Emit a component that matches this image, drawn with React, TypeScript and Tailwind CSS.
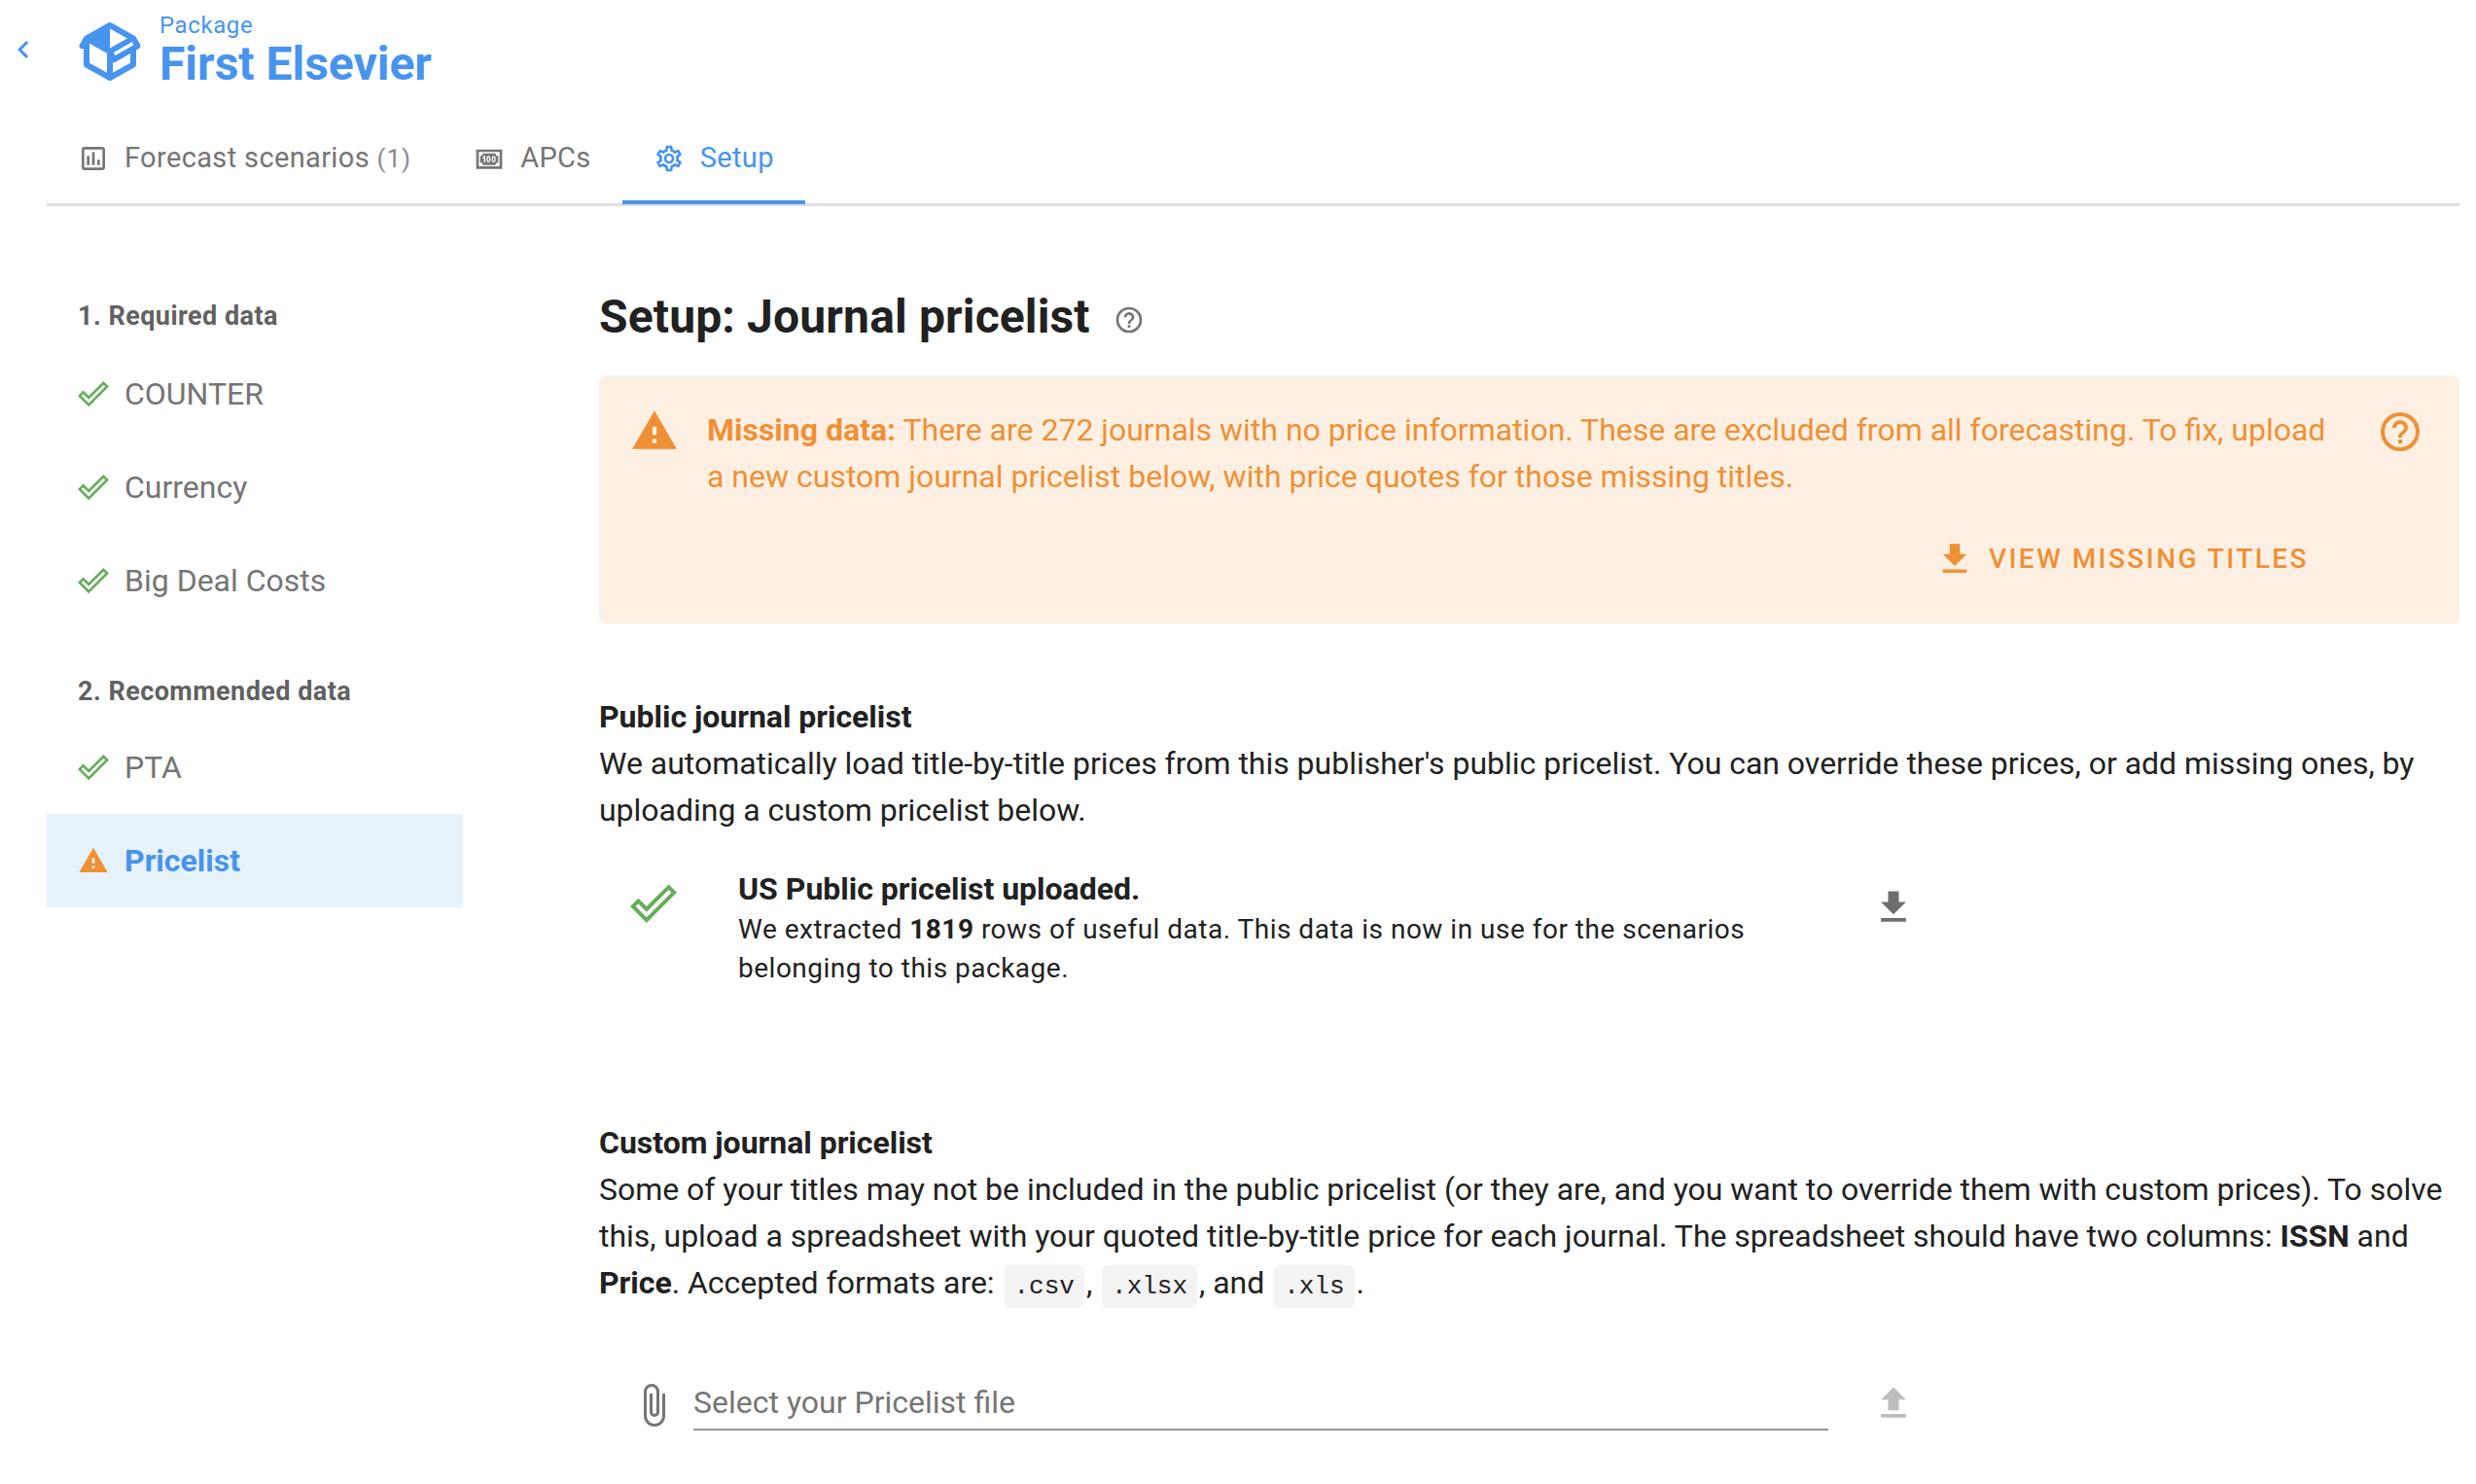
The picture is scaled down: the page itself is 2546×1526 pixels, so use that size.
import React from "react";

const P = {
  check: "M19.78,2.2L24,6.42L8.44,22L0,13.55L4.22,9.33L8.44,13.55L19.78,2.2M19.78,5L8.44,16.36L4.22,12.19L2.81,13.55L8.44,19.17L21.19,6.42L19.78,5Z",
  alert: "M13 14H11V10H13M13 18H11V16H13M1 21H23L12 2L1 21Z",
  help: "M11,18H13V16H11V18M12,2A10,10 0 0,0 2,12A10,10 0 0,0 12,22A10,10 0 0,0 22,12A10,10 0 0,0 12,2M12,20C7.59,20 4,16.41 4,12C4,7.59 7.59,4 12,4C16.41,4 20,7.59 20,12C20,16.41 16.41,20 12,20M12,6A4,4 0 0,0 8,10H10A2,2 0 0,1 12,8A2,2 0 0,1 14,10C14,12 11,11.75 11,15H13C13,12.75 16,12.5 16,10A4,4 0 0,0 12,6Z",
  download: "M5,20H19V18H5M19,9H15V3H9V9H5L12,16L19,9Z",
  upload: "M9,16V10H5L12,3L19,10H15V16H9M5,20V18H19V20H5Z",
  clip: "M16.5,6V17.5A4,4 0 0,1 12.5,21.5A4,4 0 0,1 8.5,17.5V5A2.5,2.5 0 0,1 11,2.5A2.5,2.5 0 0,1 13.5,5V15.5A1,1 0 0,1 12.5,16.5A1,1 0 0,1 11.5,15.5V6H10V15.5A2.5,2.5 0 0,0 12.5,18A2.5,2.5 0 0,0 15,15.5V5A4,4 0 0,0 11,1A4,4 0 0,0 7,5V17.5A5.5,5.5 0 0,0 12.5,23A5.5,5.5 0 0,0 18,17.5V6H16.5Z",
  chevron: "M15.41,16.58L10.83,12L15.41,7.41L14,6L8,12L14,18L15.41,16.58Z",
  poll: "M9 17H7V10H9V17M13 17H11V7H13V17M17 17H15V13H17V17M19 19H5V5H19V19.1M19 3H5C3.9 3 3 3.9 3 5V19C3 20.1 3.9 21 5 21H19C20.1 21 21 20.1 21 19V5C21 3.9 20.1 3 19 3Z",
  cash: "M2,5H22V20H2V5M20,18V7H4V18H20M17,8A2,2 0 0,0 19,10V15A2,2 0 0,0 17,17H7A2,2 0 0,0 5,15V10A2,2 0 0,0 7,8H17M17,13V12C17,10.9 16.33,10 15.5,10C14.67,10 14,10.9 14,12V13C14,14.1 14.67,15 15.5,15C16.33,15 17,14.1 17,13M15.5,11A0.5,0.5 0 0,1 16,11.5V13.5A0.5,0.5 0 0,1 15.5,14A0.5,0.5 0 0,1 15,13.5V11.5A0.5,0.5 0 0,1 15.5,11M13,13V12C13,10.9 12.33,10 11.5,10C10.67,10 10,10.9 10,12V13C10,14.1 10.67,15 11.5,15C12.33,15 13,14.1 13,13M11.5,11A0.5,0.5 0 0,1 12,11.5V13.5A0.5,0.5 0 0,1 11.5,14A0.5,0.5 0 0,1 11,13.5V11.5A0.5,0.5 0 0,1 11.5,11M8,15H9V10H8L7,11V12L8,11V15Z",
  pkg: "M2,10.96C1.5,10.68 1.35,10.07 1.63,9.59L3.13,7C3.24,6.8 3.41,6.66 3.6,6.58L11.43,2.18C11.59,2.06 11.79,2 12,2C12.21,2 12.41,2.06 12.57,2.18L20.47,6.62C20.66,6.72 20.82,6.88 20.91,7.08L22.36,9.6C22.64,10.08 22.47,10.69 22,10.96L21,11.54V16.5C21,16.88 20.79,17.21 20.47,17.38L12.57,21.82C12.41,21.94 12.21,22 12,22C11.79,22 11.59,21.94 11.43,21.82L3.53,17.38C3.21,17.21 3,16.88 3,16.5V10.96C2.7,11.13 2.32,11.14 2,10.96M12,4.15V4.15L12,10.85V10.85L17.96,7.5L12,4.15M5,15.91L11,19.29V12.58L5,9.21V15.91M19,15.91V12.69L14,15.59C13.67,15.77 13.3,15.76 13,15.6V19.29L19,15.91M13.85,13.36L20.13,9.73L19.55,8.72L13.27,12.35L13.85,13.36Z",
  cog: "M12,8A4,4 0 0,1 16,12A4,4 0 0,1 12,16A4,4 0 0,1 8,12A4,4 0 0,1 12,8M12,10A2,2 0 0,0 10,12A2,2 0 0,0 12,14A2,2 0 0,0 14,12A2,2 0 0,0 12,10M10,22C9.75,22 9.54,21.82 9.5,21.58L9.13,18.93C8.5,18.68 7.96,18.34 7.44,17.94L4.95,18.95C4.73,19.03 4.46,18.95 4.34,18.73L2.34,15.27C2.21,15.05 2.27,14.78 2.46,14.63L4.57,12.97L4.5,12L4.57,11L2.46,9.37C2.27,9.22 2.21,8.95 2.34,8.73L4.34,5.27C4.46,5.05 4.73,4.96 4.95,5.05L7.44,6.05C7.96,5.66 8.5,5.32 9.13,5.07L9.5,2.42C9.54,2.18 9.75,2 10,2H14C14.25,2 14.46,2.18 14.5,2.42L14.87,5.07C15.5,5.32 16.04,5.66 16.56,6.05L19.05,5.05C19.27,4.96 19.54,5.05 19.66,5.27L21.66,8.73C21.79,8.95 21.73,9.22 21.54,9.37L19.43,11L19.5,12L19.43,13L21.54,14.63C21.73,14.78 21.79,15.05 21.66,15.27L19.66,18.73C19.54,18.95 19.27,19.04 19.05,18.95L16.56,17.95C16.04,18.34 15.5,18.68 14.87,18.93L14.5,21.58C14.46,21.82 14.25,22 14,22H10M11.25,4L10.88,6.61C9.68,6.86 8.62,7.5 7.85,8.39L5.44,7.35L4.69,8.65L6.8,10.2C6.4,11.37 6.4,12.64 6.8,13.8L4.68,15.36L5.43,16.66L7.86,15.62C8.63,16.5 9.68,17.14 10.87,17.38L11.24,20H12.76L13.13,17.39C14.32,17.14 15.37,16.5 16.14,15.62L18.57,16.66L19.32,15.36L17.2,13.81C17.6,12.64 17.6,11.37 17.2,10.2L19.31,8.65L18.56,7.35L16.15,8.39C15.38,7.5 14.32,6.86 13.12,6.62L12.75,4H11.25Z",
};

function Icon({ d, className }: { d: string; className: string }) {
  return (
    <svg viewBox="0 0 24 24" className={className} fill="currentColor">
      <path d={d} />
    </svg>
  );
}

function Tab({ icon, active, children }: { icon: string; active?: boolean; children: React.ReactNode }) {
  return (
    <div className={`flex h-[96px] items-center gap-[16px] px-[32px] pt-[5px] text-[29px] tracking-[0.36px] border-b-[4px] ${active ? "text-[#4694ee] border-[#4694ee]" : "text-[#757575] border-transparent"}`}>
      <Icon d={icon} className="w-[32px] h-[32px]" />
      <span>{children}</span>
    </div>
  );
}

function NavItem({ label }: { label: string }) {
  return (
    <div className="flex h-[96px] items-center gap-[16px] px-[32px] text-[32px] text-[#757575]">
      <Icon d={P.check} className="w-[32px] h-[32px] text-[#66ad5c]" />
      <span>{label}</span>
    </div>
  );
}

function Code({ children }: { children: React.ReactNode }) {
  return (
    <code className="mx-[2px] rounded-[6px] bg-[#f3f3f3] px-[10px] py-[7px] text-[26px] text-[#212121] font-['Liberation_Mono',monospace]">
      {children}
    </code>
  );
}

export default function App() {
  return (
    <div className="min-h-[1526px] overflow-hidden bg-white font-['Roboto',sans-serif] text-[#212121]">
      <header className="flex h-[112px] items-start">
        <Icon d={P.chevron} className="mt-[33px] ml-[6px] w-[36px] h-[36px] text-[#4694ee]" />
        <Icon d={P.pkg} className="mt-[17px] ml-[35px] w-[72px] h-[72px] text-[#4694ee]" />
        <div className="ml-[15px] mt-[12px] text-[#4694ee]">
          <div className="text-[24px] leading-[28px] tracking-[0.6px]">Package</div>
          <div className="text-[48px] leading-[52px] font-bold">First Elsevier</div>
        </div>
      </header>

      <nav className="ml-[48px] mr-[17px] flex h-[100px] items-end border-b-[3px] border-[#dfdfdf]">
        <div className="flex -mb-[1px]">
          <Tab icon={P.poll}>Forecast scenarios <span className="text-[26px] tracking-[1px] text-[#8a8a8a]">(1)</span></Tab>
          <Tab icon={P.cash}>APCs</Tab>
          <Tab icon={P.cog} active>Setup</Tab>
        </div>
      </nav>

      <div className="flex pl-[48px] pr-[17px] pt-[77px]">
        <aside className="w-[428px] shrink-0">
          <div className="pl-[32px] pt-[18px] h-[68px] text-[27px] leading-[36px] font-bold text-[#616161] tracking-[0.45px]">1. Required data</div>
          <NavItem label="COUNTER" />
          <NavItem label="Currency" />
          <NavItem label="Big Deal Costs" />
          <div className="mt-[32px] pl-[32px] pt-[16px] h-[64px] text-[27px] leading-[36px] font-bold text-[#616161] tracking-[0.45px]">2. Recommended data</div>
          <NavItem label="PTA" />
          <div className="flex h-[96px] items-center gap-[16px] bg-[#e6f2fc] px-[32px] text-[32px] font-bold text-[#4694ee]">
            <Icon d={P.alert} className="w-[32px] h-[32px] text-[#f09035]" />
            <span>Pricelist</span>
          </div>
        </aside>

        <main className="ml-[140px] min-w-0 flex-1 pt-[5px]">
          <h1 className="flex h-[64px] items-center text-[48px] font-bold leading-[64px] tracking-[0.15px]">
            Setup: Journal pricelist
            <Icon d={P.help} className="ml-[24px] mt-[6px] w-[32px] h-[32px] text-[#757575]" />
          </h1>

          <section className="mt-[28px] h-[256px] rounded-[8px] bg-[#fdf0e3] text-[#f09035]">
            <div className="flex pl-[32px] pr-[37px] pt-[32px]">
              <Icon d={P.alert} className="w-[50px] h-[50px] shrink-0" />
              <p className="ml-[29px] w-[1675px] text-[32px] leading-[48px]">
                <b>Missing data:</b> There are 272 journals with no price information. These are excluded from all forecasting. To fix, upload a new custom journal pricelist below, with price quotes for those missing titles.
              </p>
              <Icon d={P.help} className="ml-auto mt-[2px] w-[48px] h-[48px] shrink-0" />
            </div>
            <div className="mt-[40px] mr-[155px] flex items-center justify-end gap-[14px]">
              <Icon d={P.download} className="w-[42px] h-[42px]" />
              <span className="text-[28px] font-medium tracking-[2.45px]">VIEW MISSING TITLES</span>
            </div>
          </section>

          <section className="mt-[71px] text-[32px] leading-[48px] tracking-[-0.02px]">
            <h2 className="font-bold">Public journal pricelist</h2>
            <p>We automatically load title-by-title prices from this publisher's public pricelist. You can override these prices, or add missing ones, by uploading a custom pricelist below.</p>
          </section>

          <section className="mt-[35px] flex w-[1353px] items-start">
            <Icon d={P.check} className="mt-[13px] ml-[32px] w-[48px] h-[48px] shrink-0 text-[#66ad5c]" />
            <div className="ml-[63px] w-[1060px]">
              <div className="text-[32px] font-bold leading-[44px]">US Public pricelist uploaded.</div>
              <p className="text-[28px] leading-[40px] tracking-[0.5px]">We extracted <b>1819</b> rows of useful data. This data is now in use for the scenarios belonging to this package.</p>
            </div>
            <Icon d={P.download} className="ml-auto mt-[19px] w-[44px] h-[44px] shrink-0 text-[#6e6e6e]" />
          </section>

          <section className="mt-[135px] text-[32px] leading-[48px] tracking-[-0.02px]">
            <h2 className="font-bold">Custom journal pricelist</h2>
            <p>
              Some of your titles may not be included in the public pricelist (or they are, and you want to override them with custom prices). To solve this, upload a spreadsheet with your quoted title-by-title price for each journal. The spreadsheet should have two columns: <b>ISSN</b> and <b>Price</b>. Accepted formats are: <Code>.csv</Code>, <Code>.xlsx</Code>, and <Code>.xls</Code>.
            </p>
          </section>

          <section className="mt-[68px] flex w-[1353px] items-start">
            <Icon d={P.clip} className="ml-[32px] mt-[6px] w-[48px] h-[48px] shrink-0 text-[#757575]" />
            <div className="ml-[17px] flex h-[56px] w-[1167px] items-center border-b-[2px] border-[#949494] text-[32px] text-[#757575]">Select your Pricelist file</div>
            <Icon d={P.upload} className="ml-auto mt-[6px] w-[44px] h-[44px] shrink-0 text-[#bdbdbd]" />
          </section>
        </main>
      </div>
    </div>
  );
}
